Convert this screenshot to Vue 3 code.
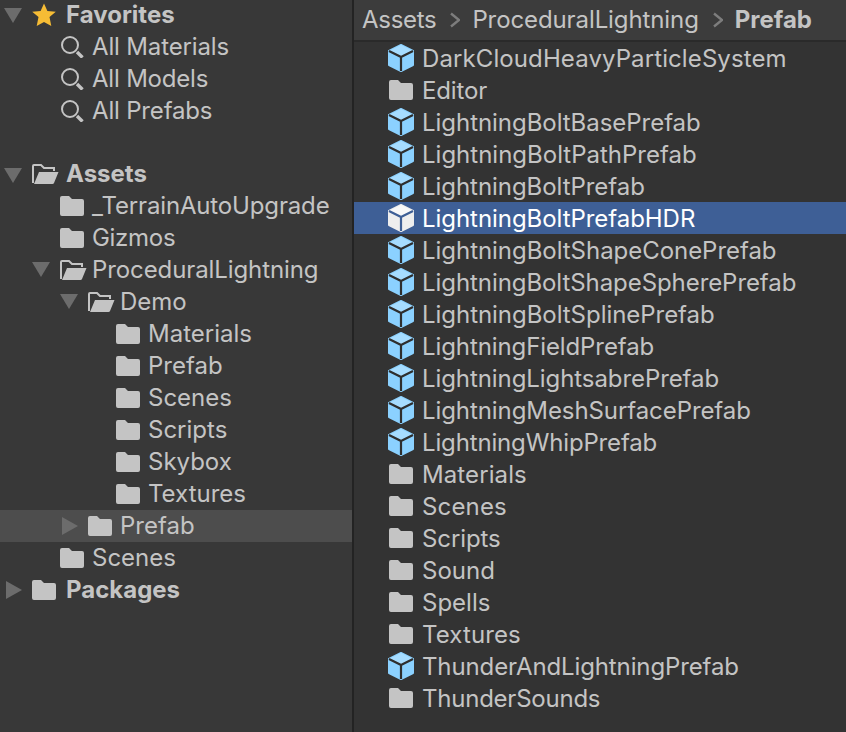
<script setup>
// track = letter-spacing in px, tuned per name against the reference widths
const tree = [
  { name: 'Favorites', level: 0, arrow: 'down', icon: 'star', bold: true },
  { name: 'All Materials', level: 1, icon: 'search', track: -0.15 },
  { name: 'All Models', level: 1, icon: 'search', track: -0.2 },
  { name: 'All Prefabs', level: 1, icon: 'search', track: -0.18 },
  { spacer: true },
  { name: 'Assets', level: 0, arrow: 'down', icon: 'open', bold: true, lower: true },
  { name: '_TerrainAutoUpgrade', level: 1, icon: 'folder', lower: true, track: -0.15 },
  { name: 'Gizmos', level: 1, icon: 'folder', lower: true, track: -0.3 },
  { name: 'ProceduralLightning', level: 1, arrow: 'down', icon: 'open', lower: true, track: -0.1 },
  { name: 'Demo', level: 2, arrow: 'down', icon: 'open', lower: true },
  { name: 'Materials', level: 3, icon: 'folder', lower: true },
  { name: 'Prefab', level: 3, icon: 'folder', lower: true },
  { name: 'Scenes', level: 3, icon: 'folder', lower: true },
  { name: 'Scripts', level: 3, icon: 'folder', lower: true },
  { name: 'Skybox', level: 3, icon: 'folder', lower: true },
  { name: 'Textures', level: 3, icon: 'folder', lower: true },
  { name: 'Prefab', level: 2, arrow: 'right', icon: 'folder', active: true, lower: true },
  { name: 'Scenes', level: 1, icon: 'folder', lower: true },
  { name: 'Packages', level: 0, arrow: 'right', icon: 'folder', bold: true, lower: true }
]

const files = [
  { name: 'DarkCloudHeavyParticleSystem', icon: 'cube', track: 0.1 },
  { name: 'Editor', icon: 'folder', track: -0.15 },
  { name: 'LightningBoltBasePrefab', icon: 'cube', track: -0.04 },
  { name: 'LightningBoltPathPrefab', icon: 'cube' },
  { name: 'LightningBoltPrefab', icon: 'cube', track: -0.05 },
  { name: 'LightningBoltPrefabHDR', icon: 'cube', selected: true, track: -0.05 },
  { name: 'LightningBoltShapeConePrefab', icon: 'cube', track: -0.04 },
  { name: 'LightningBoltShapeSpherePrefab', icon: 'cube', track: -0.07 },
  { name: 'LightningBoltSplinePrefab', icon: 'cube', track: -0.04 },
  { name: 'LightningFieldPrefab', icon: 'cube', track: -0.1 },
  { name: 'LightningLightsabrePrefab', icon: 'cube', track: -0.08 },
  { name: 'LightningMeshSurfacePrefab', icon: 'cube', track: -0.08 },
  { name: 'LightningWhipPrefab', icon: 'cube', track: -0.15 },
  { name: 'Materials', icon: 'folder', track: 0.1 },
  { name: 'Scenes', icon: 'folder', track: 0.15 },
  { name: 'Scripts', icon: 'folder', track: -0.1 },
  { name: 'Sound', icon: 'folder' },
  { name: 'Spells', icon: 'folder' },
  { name: 'Textures', icon: 'folder', track: 0.1 },
  { name: 'ThunderAndLightningPrefab', icon: 'cube', track: -0.12 },
  { name: 'ThunderSounds', icon: 'folder', track: -0.23 }
]

const tracking = (item) => (item.track ? { letterSpacing: item.track + 'px' } : null)
</script>

<template>
  <div class="window">
    <aside class="tree">
      <template v-for="(item, i) in tree" :key="i">
        <div v-if="item.spacer" class="row"></div>
        <div v-else class="row" :class="{ active: item.active, lower: item.lower }" :style="{ paddingLeft: item.level * 28 + 4 + 'px' }">
          <span class="arrow" :class="{ 'arrow-bold': item.bold && item.arrow === 'down' }">
            <svg v-if="item.arrow === 'down'" width="18" height="16" viewBox="0 0 18 16"><path d="M0 0H18L9 15Z" fill="#6c6c6c" /></svg>
            <svg v-else-if="item.arrow === 'right'" width="16" height="18" viewBox="0 0 16 18"><path d="M0 0L16 9L0 18Z" fill="#6c6c6c" /></svg>
          </span>
          <span class="icon">
            <svg v-if="item.icon === 'star'" width="24" height="24" viewBox="0 0 24 24"><path d="M12 1.5L15.4 9L23.8 9.7L17.5 15L19.3 24L12 20L4.7 24L6.5 15L0.2 9.7L8.6 9Z" fill="#f6bc35" /></svg>
            <svg v-else-if="item.icon === 'search'" width="24" height="24" viewBox="0 0 24 24"><circle cx="10" cy="11" r="8" fill="none" stroke="#c4c4c4" stroke-width="2" /><path d="M17 18L22.5 23.5" stroke="#c4c4c4" stroke-width="3.4" /></svg>
            <svg v-else-if="item.icon === 'open'" width="27" height="20" viewBox="0 0 27 20"><path d="M1 19V2Q1 1 2 1H9L12 4H22V7" fill="none" stroke="#c4c4c4" stroke-width="2" /><path d="M7 8H26.5L22 19Q21.6 20 20.5 20H2Z" fill="#c4c4c4" /></svg>
            <svg v-else width="24" height="20" viewBox="0 0 24 20"><path d="M0 2Q0 0 2 0H9L12 3H22Q24 3 24 5V18Q24 20 22 20H2Q0 20 0 18Z" fill="#c4c4c4" /></svg>
          </span>
          <span class="label" :class="{ bold: item.bold }" :style="tracking(item)">{{ item.name }}</span>
        </div>
      </template>
    </aside>
    <main class="files">
      <header class="crumbs">
        <span class="label first">Assets</span>
        <svg width="12" height="16" viewBox="0 0 12 16"><path d="M3 1.5L11 8L3 14.5" fill="none" stroke="#7d7d7d" stroke-width="2.4" /></svg>
        <span class="label second">ProceduralLightning</span>
        <svg width="12" height="16" viewBox="0 0 12 16"><path d="M3 1.5L11 8L3 14.5" fill="none" stroke="#7d7d7d" stroke-width="2.4" /></svg>
        <span class="label strong">Prefab</span>
      </header>
      <div v-for="file in files" :key="file.name" class="file" :class="{ selected: file.selected }">
        <span class="file-icon">
          <svg v-if="file.icon === 'cube'" width="26" height="28" viewBox="0 0 26 28">
            <path d="M13 1L25 7V21L13 27L1 21V7Z" :fill="file.selected ? '#eeeeee' : '#8bd1ff'" :stroke="file.selected ? '#eeeeee' : '#8bd1ff'" stroke-width="2" stroke-linejoin="round" />
            <path d="M13 1L25 7L13 13L1 7Z" :fill="file.selected ? '#f8f8f8' : '#a6dcff'" />
            <path d="M1 7L13 13V27M25 7L13 13" fill="none" :stroke="file.selected ? '#3e5f96' : '#2e2e2e'" stroke-width="2.2" />
          </svg>
          <svg v-else width="24" height="20" viewBox="0 0 24 20"><path d="M0 2Q0 0 2 0H9L12 3H22Q24 3 24 5V18Q24 20 22 20H2Q0 20 0 18Z" fill="#c4c4c4" /></svg>
        </span>
        <span class="label" :style="tracking(file)">{{ file.name }}</span>
      </div>
    </main>
  </div>
</template>

<style scoped>
.window {
  display: flex;
  width: 846px;
  height: 732px;
  overflow: hidden;
  background: #383838;
  color: #c4c4c4;
  font-family: Inter, "Liberation Sans", sans-serif;
  font-size: 24px;
}

.tree {
  flex: 0 0 352px;
  margin-top: -2px;
}

.row {
  display: flex;
  align-items: center;
  height: 32px;
  white-space: nowrap;
}

.row.active {
  background: #4d4d4d;
}

.arrow {
  display: flex;
  align-items: center;
  justify-content: flex-end;
  width: 18px;
  margin-right: 10px;
}

.arrow-bold {
  margin-top: 4px;
}

.icon {
  display: flex;
  align-items: center;
  width: 32px;
}

.label {
  white-space: nowrap;
}

.lower .label {
  margin-top: -2px;
}

.bold {
  margin-left: 2px;
  font-weight: 700;
}

.files {
  flex: 1;
  border-left: 2px solid #232323;
  background: #333333;
}

.crumbs {
  display: flex;
  align-items: center;
  gap: 12px;
  height: 40px;
  padding-left: 8px;
  border-bottom: 2px solid #2a2a2a;
  background: #3c3c3c;
}

.crumbs .label {
  margin-top: -2px;
}

.crumbs .first {
  letter-spacing: -0.3px;
}

.crumbs .second {
  letter-spacing: -0.1px;
}

.crumbs .strong {
  font-weight: 700;
}

.file {
  display: flex;
  align-items: center;
  height: 32px;
  padding-left: 34px;
}

.file.selected {
  background: #3e5f96;
  color: #ffffff;
}

.file-icon {
  display: flex;
  align-items: center;
  justify-content: center;
  width: 26px;
  margin-right: 8px;
}
</style>
